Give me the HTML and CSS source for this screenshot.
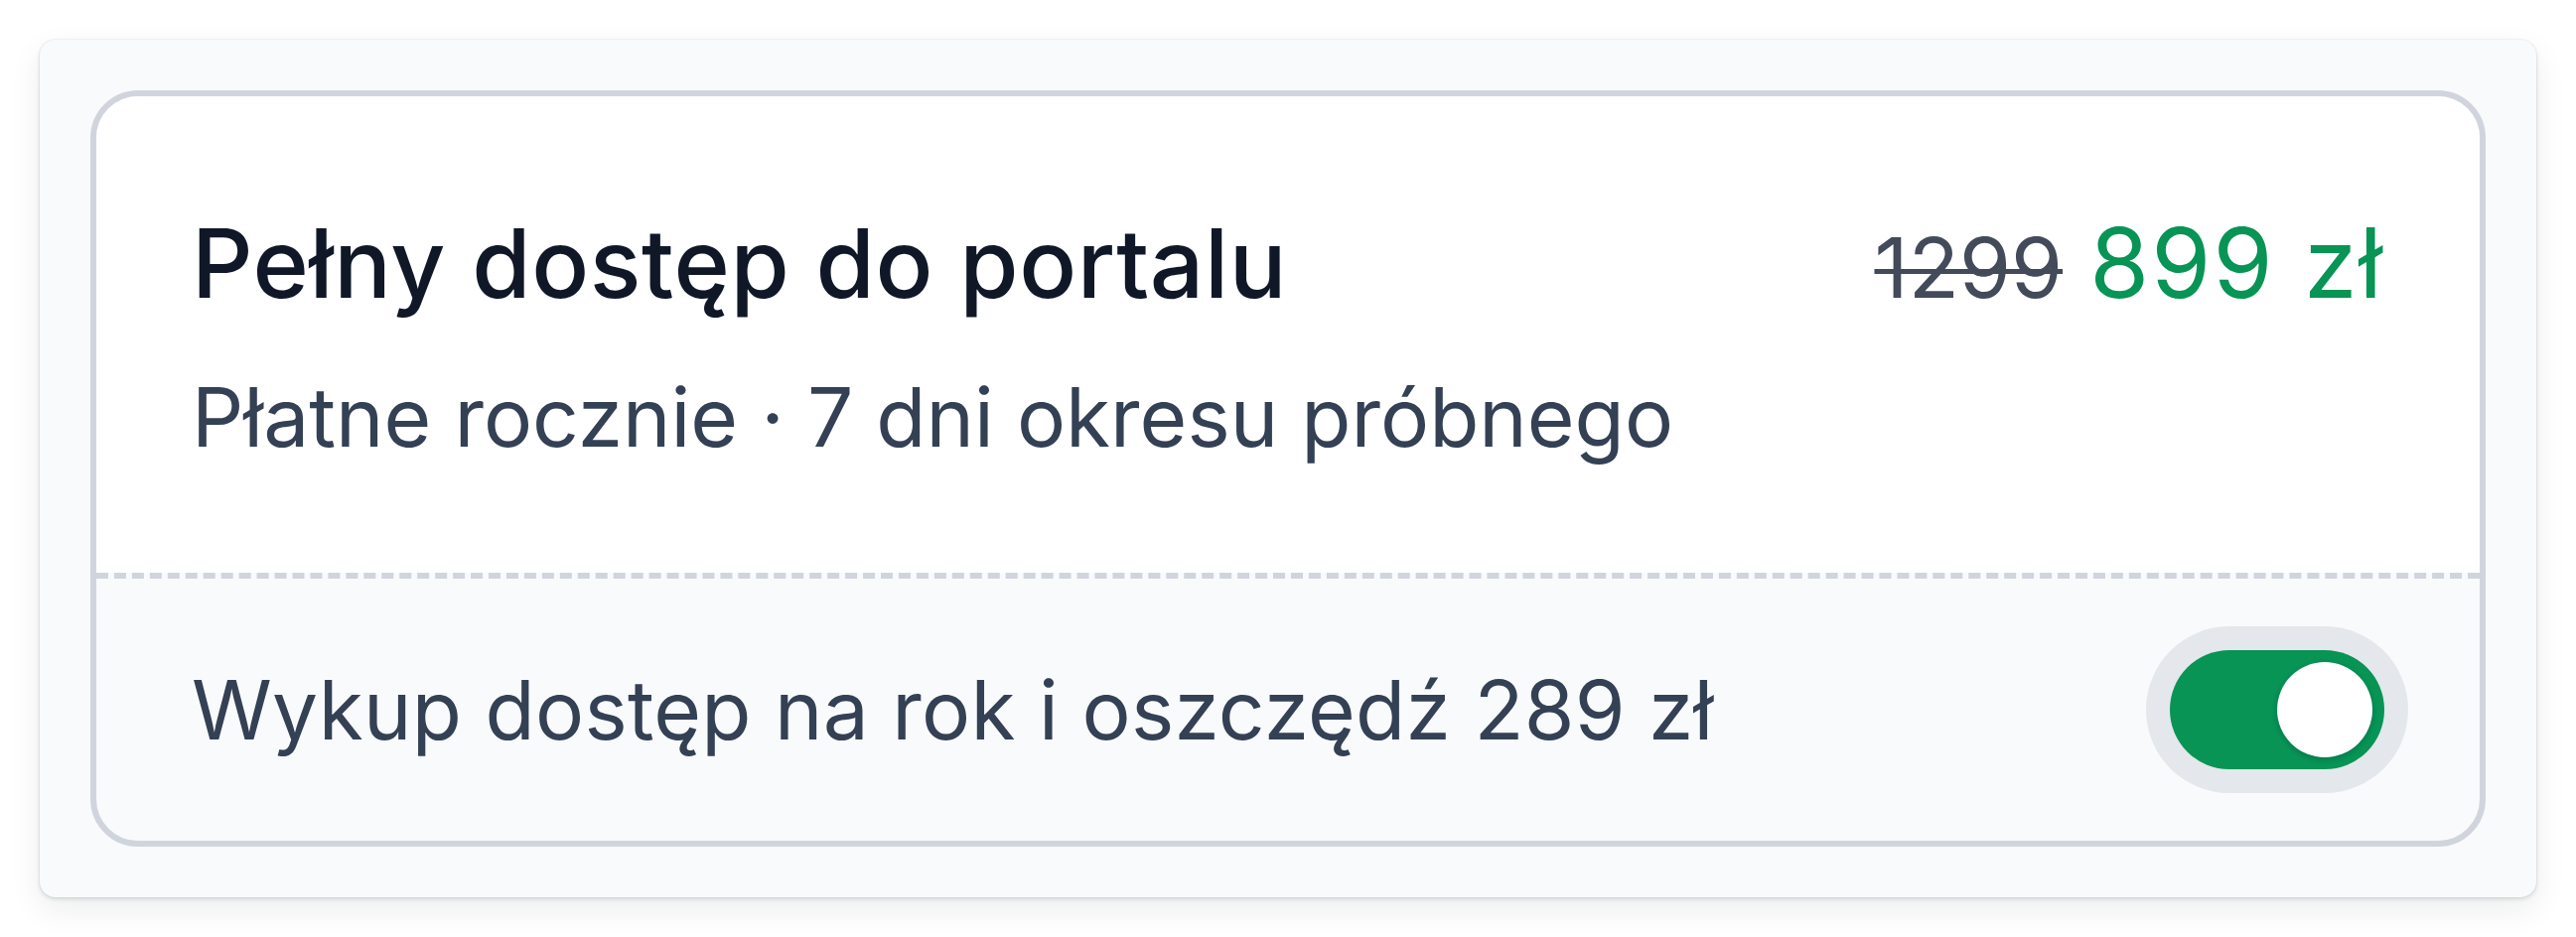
FILE: index.html
```html
<!DOCTYPE html>
<html lang="pl">
<head>
  <meta charset="UTF-8" />
  <meta name="viewport" content="width=device-width, initial-scale=1.0"/>
  <title>Plan dostępu</title>
  <link rel="stylesheet" href="styles.css">
</head>

<body>
  <div class="plan-card">
    <div class="plan">
      <!-- Plan name, price and billing info -->
      <div class="plan-main">
        <div class="plan-head">
          <h2 class="plan-title">Pełny dostęp do portalu</h2>
          <p class="plan-price"><s class="price-old">1299</s> <span class="price-new">899 zł</span></p>
        </div>
        <p class="plan-meta">Płatne rocznie · 7 dni okresu próbnego</p>
      </div>

      <!-- Yearly billing switch -->
      <label class="plan-footer">
        <span class="plan-offer">Wykup dostęp na rok i oszczędź 289 zł</span>
        <span class="toggle is-on"><span class="toggle-knob"></span></span>
      </label>
    </div>
  </div>
</body>
</html>
```

FILE: styles.css
```css
body {
  margin: 0;
  padding: 40px;
  background: #fff;
  font-family: Inter, "Noto Sans", sans-serif;
  color: #344054;
}

/* Outer grey card */
.plan-card {
  padding: 51px;
  background: #f9fafb;
  border-radius: 16px;
  box-shadow: 0 0 0 1px rgba(16, 24, 40, 0.04),
              0 2px 4px rgba(16, 24, 40, 0.12),
              0 12px 32px rgba(16, 24, 40, 0.08);
}

/* Bordered plan box */
.plan {
  border: 6px solid #d0d5dd;
  border-radius: 48px;
  overflow: hidden;
  background: #f9fafb;
}

.plan-main {
  background: #fff;
  padding: 96px;
}

.plan-head {
  display: flex;
  justify-content: space-between;
  align-items: baseline;
  height: 144px;
}

.plan-title {
  margin: 0;
  font-size: 96px;
  line-height: 144px;
  font-weight: 500;
  letter-spacing: 0.6px;
  color: #101828;
}

.plan-price {
  margin: 0;
  font-size: 97px;
  line-height: 144px;
  white-space: nowrap;
}

.price-old {
  font-size: 84px;
  line-height: 1;
  color: #434a59;
  text-decoration-thickness: 5px;
}

.price-new {
  color: #079455;
  letter-spacing: 2px;
}

.plan-meta {
  margin: 24px 0 0;
  font-size: 82px;
  line-height: 120px;
  color: #344054;
}

/* Footer row with switch */
.plan-footer {
  display: flex;
  justify-content: space-between;
  align-items: center;
  padding: 72px 96px;
  border-top: 6px dashed #d0d5dd;
  font-size: 82px;
  letter-spacing: 0.25px;
  color: #344054;
  cursor: pointer;
}

.toggle {
  display: flex;
  width: 216px;
  height: 120px;
  padding: 12px;
  box-sizing: border-box;
  border-radius: 60px;
  background: #e4e7ec;
  box-shadow: 0 0 0 24px #e4e7ec;
}

.toggle.is-on {
  background: #079455;
  justify-content: flex-end;
}

.toggle-knob {
  width: 96px;
  height: 96px;
  border-radius: 50%;
  background: #fff;
  box-shadow: 0 2px 6px rgba(16, 24, 40, 0.14), 0 2px 4px rgba(16, 24, 40, 0.08);
}
```
